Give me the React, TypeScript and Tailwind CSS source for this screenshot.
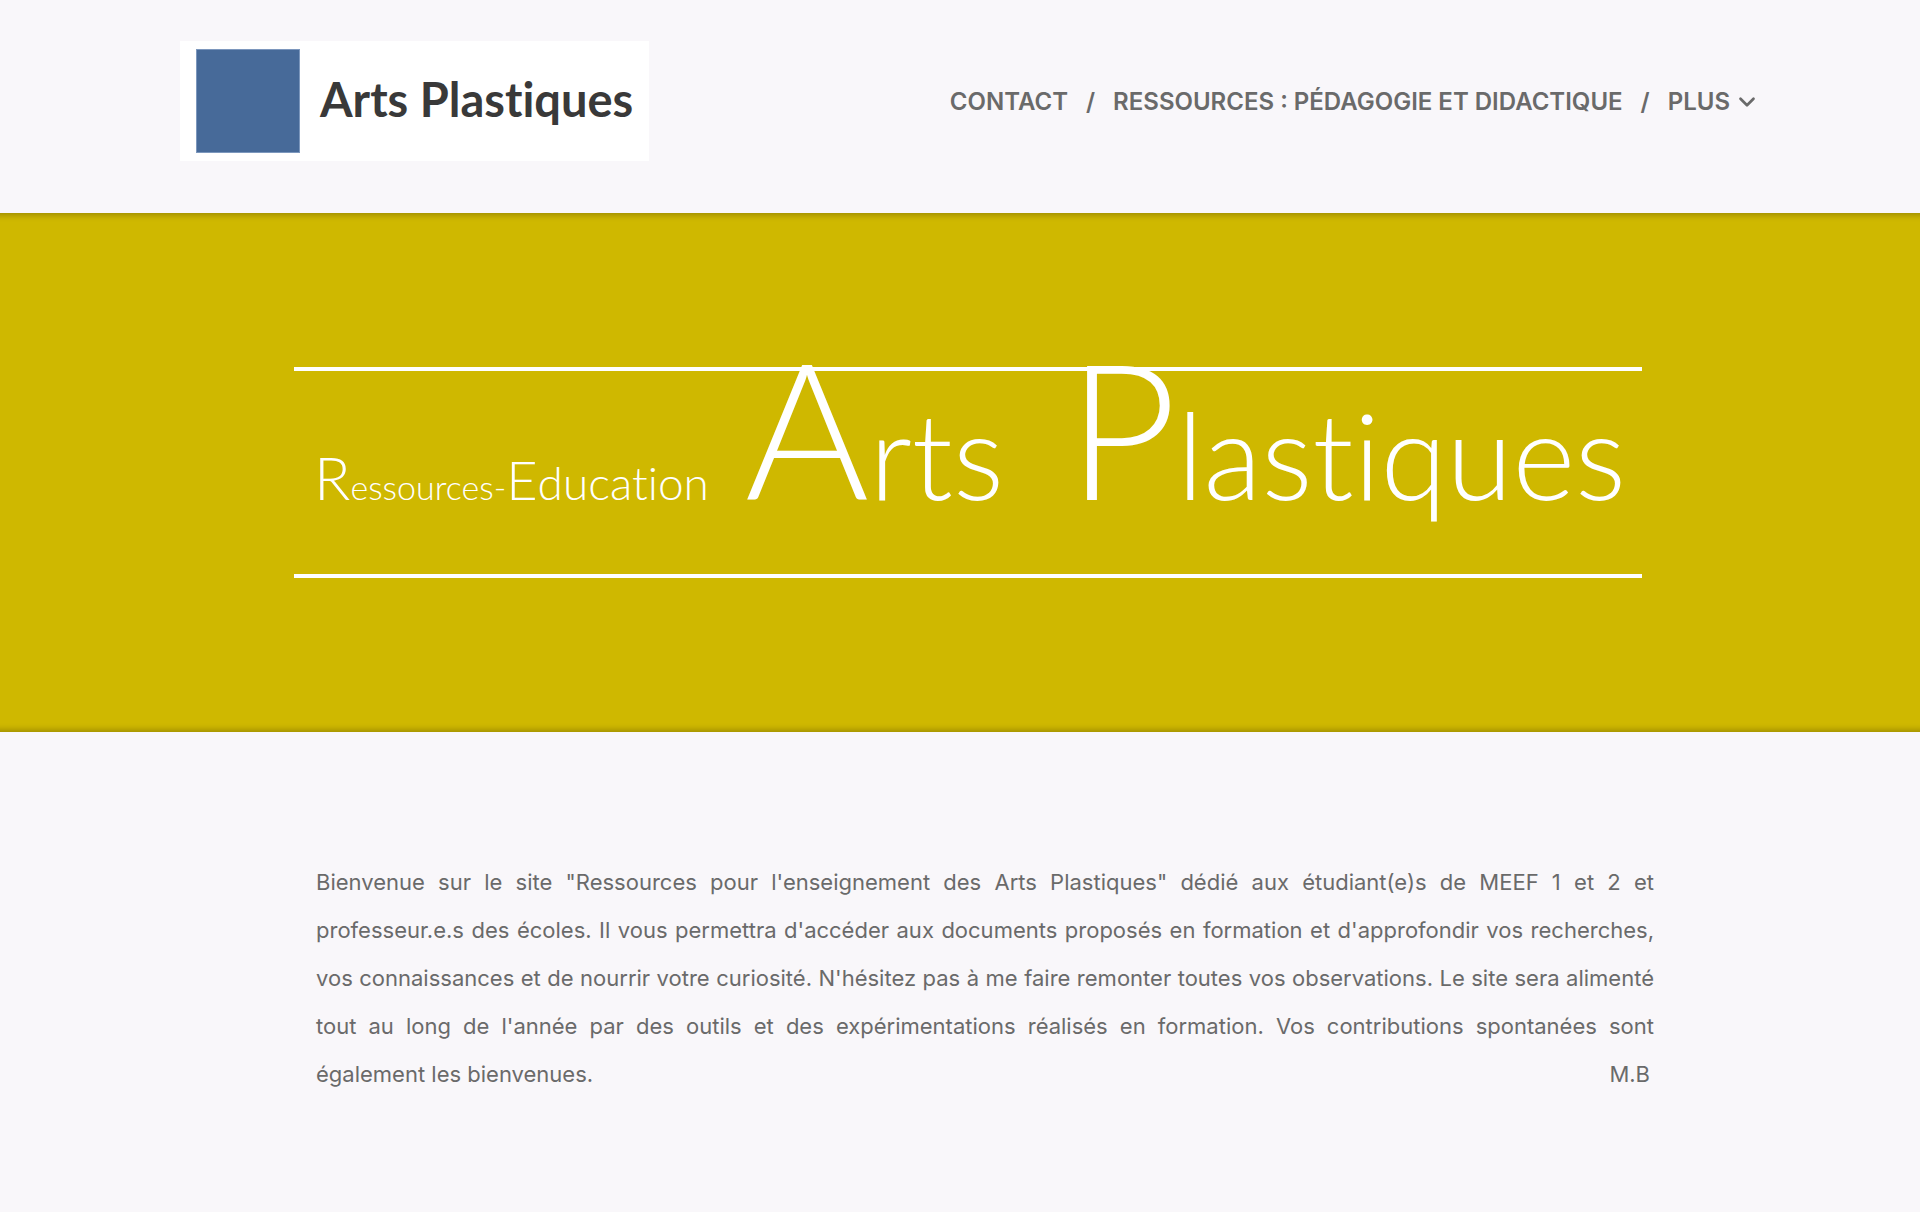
import { ChevronDown } from 'lucide-react';

const navLinks = [
  { label: 'Contact', href: '#contact' },
  { label: 'Ressources : Pédagogie et didactique', href: '#ressources' },
];

function Header() {
  return (
    <header className="flex items-start justify-between pt-[41px] pr-[160px] pb-[52px] pl-[180px]">
      <a href="#accueil" className="flex h-[120px] items-center bg-white px-4">
        <span className="size-[104px] border border-[#7c97bd] bg-[#476a99]" />
        <span className="pb-1 pl-5 text-[47px] leading-none font-bold text-[#393939] font-['Lato',sans-serif] [font-variant-ligatures:none]">
          Arts Plastiques
        </span>
      </a>

      <nav className="flex items-center pt-[43px] text-2xl leading-9 font-semibold text-[#6a6a6a] uppercase">
        {navLinks.map(({ label, href }) => (
          <div key={href} className="flex">
            <a href={href}>{label}</a>
            <span className="px-[18px]">/</span>
          </div>
        ))}
        <button type="button" className="flex items-center gap-1 uppercase">
          Plus
          <ChevronDown size={26} strokeWidth={2.5} />
        </button>
      </nav>
    </header>
  );
}

function Hero() {
  return (
    <section className="bg-[#cfb800] py-[154px] pr-[278px] pl-[294px] shadow-[inset_0_10px_6px_-8px_rgba(0,0,0,0.25),inset_0_-10px_6px_-8px_rgba(0,0,0,0.25)]">
      <div className="h-[211px] border-y-4 border-white pr-4 pl-5">
        <h1 className="flex items-baseline leading-[110px] font-light whitespace-nowrap text-white font-['Lato',sans-serif] [font-variant-ligatures:none]">
          <span>
            <span className="text-[60px]">R</span>
            <span className="text-[34px]">essources-</span>
            <span className="text-[54px]">E</span>
            <span className="text-[46px]">ducation</span>
          </span>
          <span className="ml-9">
            <span className="text-[190px]">A</span>
            <span className="text-[120px]">rts</span>
          </span>
          <span className="ml-auto">
            <span className="text-[190px]">P</span>
            <span className="text-[120px]">lastiques</span>
          </span>
        </h1>
      </div>
    </section>
  );
}

function Intro() {
  return (
    <section className="pt-[126px] pr-[266px] pb-[112px] pl-[316px]">
      <p className="text-justify text-[22px] leading-[48px] text-[#6a6a6a]">
        Bienvenue sur le site "Ressources pour l'enseignement des Arts Plastiques" dédié aux
        étudiant(e)s de MEEF 1 et 2 et professeur.e.s des écoles. Il vous permettra d'accéder aux
        documents proposés en formation et d'approfondir vos recherches, vos connaissances et de
        nourrir votre curiosité. N'hésitez pas à me faire remonter toutes vos observations. Le site
        sera alimenté tout au long de l'année par des outils et des expérimentations réalisés en
        formation. Vos contributions spontanées sont également les bienvenues.
        <span className="float-right pr-1">M.B</span>
      </p>
    </section>
  );
}

export default function App() {
  return (
    <div className="min-h-screen bg-[#f9f7fa] font-['Inter',sans-serif]">
      <Header />
      <main>
        <Hero />
        <Intro />
      </main>
    </div>
  );
}
